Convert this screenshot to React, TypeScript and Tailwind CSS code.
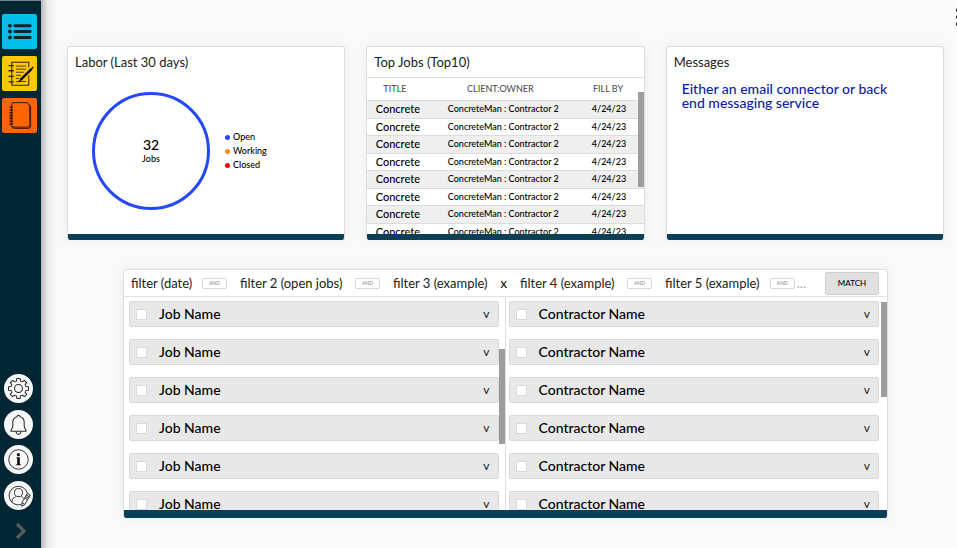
import React from "react";

const jobs = Array.from({ length: 8 }, (_, i) => ({
  id: i,
  title: "Concrete",
  client: "ConcreteMan : Contractor 2",
  fillBy: "4/24/23",
}));

const legend = [
  { label: "Open", dot: "bg-[#2448ff]" },
  { label: "Working", dot: "bg-[#ff8c1a]" },
  { label: "Closed", dot: "bg-[#f5000c]" },
];

const filters = [
  { label: "filter (date)", join: "AND" },
  { label: "filter 2 (open jobs)", join: "AND" },
  { label: "filter 3 (example)", join: "x" },
  { label: "filter 4 (example)", join: "AND" },
];

function ListIcon() {
  return (
    <svg viewBox="0 0 34 34" className="size-full" stroke="#10242c" strokeLinecap="round">
      <g fill="#10242c" stroke="none">
        <circle cx="7.7" cy="11.3" r="1.9" />
        <circle cx="7.7" cy="17" r="1.9" />
        <circle cx="7.7" cy="22.8" r="1.9" />
      </g>
      <path d="M12.5 11.3H27.3M12.5 17H27.3M12.5 22.8H27.3" strokeWidth="2.9" />
    </svg>
  );
}

function NotesIcon() {
  return (
    <svg viewBox="0 0 34 34" className="size-full" fill="none" stroke="#2b2407" strokeWidth="1">
      <path d="M26 11V6H9.5V28.5H26V19" />
      <path d="M6.3 9.3H11.5M6.3 14.3H11.5M6.3 19.8H11.5M6.3 25.2H11.5" strokeWidth="1.3" />
      <path d="M13.5 9.8H23.5M13.5 12.8H23.5M13.5 15.8H21.5M13.5 18.8H18.5M13.5 21.8H16.5M13.5 24.8H23.5" strokeWidth=".8" />
      <path d="M18 23.2L28.8 12.4" stroke="#111" strokeWidth="2.4" />
      <path d="M16.4 24.8L18.6 22.6M28.2 13L30.2 11" stroke="#111" strokeWidth="1.3" strokeLinecap="round" />
    </svg>
  );
}

function NotebookIcon() {
  return (
    <svg viewBox="0 0 34 34" className="size-full" fill="none" stroke="#2b1200" strokeWidth=".9">
      <path d="M9.5 8V6.5Q9.5 4.5 11.5 4.5H23.5Q25.5 4.5 26 6.5L27 8.5V26Q27 28.3 24.8 28.3H11.5Q9.5 28.3 9.5 26.5V8" />
      <path d="M26.3 6.3Q27.8 7 27.8 9V27Q27.8 29.5 25.3 29.5H12Q9.8 29.5 9.6 27.5" strokeWidth=".9" />
      <path d="M7.3 9H10.5M7.3 11.7H10.5M7.3 14.4H10.5M7.3 17.1H10.5M7.3 19.8H10.5M7.3 22.5H10.5M7.3 25.2H10.5" strokeWidth="1.5" />
    </svg>
  );
}

function GearIcon() {
  const teeth = [0, 45, 90, 135, 180, 225, 270, 315];
  return (
    <svg viewBox="0 0 28 28" className="size-full" fill="none" stroke="#262626" strokeWidth="1" strokeLinejoin="round">
      {teeth.map((a) => (
        <path
          key={a}
          transform={`rotate(${a} 14 14)`}
          d="M11.2 7.2L12.1 6.8L12.4 4.4H15.6L15.9 6.8L16.8 7.2"
        />
      ))}
      <circle cx="14" cy="14" r="3.8" />
    </svg>
  );
}

function BellIcon() {
  return (
    <svg viewBox="0 0 28 28" className="size-full" fill="none" stroke="#262626" strokeWidth="1" strokeLinejoin="round">
      <path d="M7 20.5H21Q21.7 20.5 21.2 19.5Q19.6 17.6 19.5 15.5V12Q19.4 7.3 15.4 6.5Q15.4 5 14 5T12.6 6.5Q8.6 7.3 8.5 12V15.5Q8.4 17.6 6.8 19.5Q6.3 20.5 7 20.5Z" />
      <path d="M11.8 21V21.3Q12.3 23.6 14 23.6T16.2 21.3V21" />
    </svg>
  );
}

function InfoIcon() {
  return (
    <svg viewBox="0 0 28 28" className="size-full" fill="none" stroke="#262626">
      <circle cx="14" cy="14" r="9.4" strokeWidth=".9" />
      <g fill="#111" stroke="none">
        <circle cx="13.9" cy="9.3" r="1.5" />
        <path d="M12 11.9H15.3V18.6H16.2V19.6H11.8V18.6H12.7V12.9H12Z" />
      </g>
    </svg>
  );
}

function ProfileIcon() {
  return (
    <svg viewBox="0 0 28 28" className="size-full" fill="none" stroke="#262626" strokeWidth=".9" strokeLinejoin="round">
      <path d="M16.5 22.7A9 9 0 1 1 22.6 11.8" />
      <circle cx="14" cy="11.2" r="3.9" />
      <path d="M7.4 20.4Q8 16.2 11.3 15.1M16.8 15.1Q18.3 15.7 19.2 17" />
      <path d="M17.3 20.9L22.6 11.9L25.3 13.5L20.1 22.6L17.2 24.5ZM17.3 20.9L20.1 22.6M21.6 13.6L24.4 15.2M20.8 15L23.5 16.6M20 16.4L22.7 18" />
    </svg>
  );
}

const tiles = [
  { name: "Lists", color: "bg-[#00bfea]", icon: <ListIcon /> },
  { name: "Notes", color: "bg-[#ffc800]", icon: <NotesIcon /> },
  { name: "Notebook", color: "bg-[#ff6500]", icon: <NotebookIcon /> },
];

const tools = [
  { name: "Settings", icon: <GearIcon /> },
  { name: "Notifications", icon: <BellIcon /> },
  { name: "Information", icon: <InfoIcon /> },
  { name: "Profile", icon: <ProfileIcon /> },
];

function Sidebar() {
  return (
    <nav className="flex w-[41px] shrink-0 flex-col border-t border-[#71828a] bg-[#032635] pt-[13px] pb-2">
      <div className="flex flex-col gap-[7px] pl-0.5">
        {tiles.map((t) => (
          <button key={t.name} aria-label={t.name} className={`size-[35px] rounded-[2px] ${t.color}`}>
            {t.icon}
          </button>
        ))}
      </div>
      <div className="mt-auto flex h-34 flex-col justify-between pl-1">
        {tools.map((t) => (
          <button key={t.name} aria-label={t.name} className="size-[29px] rounded-full bg-[#f7f7f7]">
            {t.icon}
          </button>
        ))}
      </div>
      <button aria-label="Expand" className="mt-3 flex h-[18px] items-center justify-center">
        <svg viewBox="0 0 12 18" className="h-[18px] w-3" fill="none" stroke="#555b5e" strokeWidth="3.2">
          <path d="M2 2L9 9L2 16" />
        </svg>
      </button>
    </nav>
  );
}

function Card({ title, children }: { title: string; children?: React.ReactNode }) {
  return (
    <section className="flex h-[194px] flex-col overflow-hidden rounded-[3px] border border-b-0 border-[#dedede] bg-white shadow-[0_0_12px_rgba(0,0,0,0.05)]">
      <h2 className="px-[7px] pt-[7px] pb-[7px] text-[13px] leading-4 text-[#222]">{title}</h2>
      <div className="flex min-h-0 flex-1 flex-col overflow-hidden">{children}</div>
      <div className="h-1.5 shrink-0 bg-[#0a3f56]" />
    </section>
  );
}

function LaborCard() {
  return (
    <Card title="Labor (Last 30 days)">
      <div className="flex items-center gap-[15px] pt-[15px] pl-6">
        <div className="flex size-[118px] flex-col items-center justify-center rounded-full border-3 border-[#2448ff] text-black">
          <span className="text-[14px] leading-4 font-medium">32</span>
          <span className="text-[9px] leading-3 font-medium">Jobs</span>
        </div>
        <ul className="text-[9px] leading-[14px] font-medium text-black">
          {legend.map((l) => (
            <li key={l.label} className="flex items-center gap-[3px]">
              <span className={`size-[5px] rounded-full ${l.dot}`} />
              {l.label}
            </li>
          ))}
        </ul>
      </div>
    </Card>
  );
}

function JobsCard() {
  return (
    <Card title="Top Jobs (Top10)">
      <div className="relative border-t border-[#dedede]">
        <table className="w-full table-fixed border-collapse text-center text-black">
          <colgroup>
            <col className="w-[61px]" />
            <col className="w-[150px]" />
            <col />
          </colgroup>
          <thead>
            <tr className="h-[22px] text-[9px] leading-3 text-[#555]">
              <th className="p-0 pr-1.5 font-medium">TITLE</th>
              <th className="p-0 pr-1.5 font-medium">CLIENT:OWNER</th>
              <th className="p-0 pr-1.5 font-medium">FILL BY</th>
            </tr>
          </thead>
          <tbody>
            {jobs.map((j) => (
              <tr
                key={j.id}
                className="border-t border-[#dcdcdc] leading-4 font-medium odd:h-[18px] odd:bg-[#efefef] even:h-[17px]"
              >
                <td className="p-0 text-[11px]">{j.title}</td>
                <td className="p-0 text-[9px]">{j.client}</td>
                <td className="p-0 pr-1 text-[9px]">{j.fillBy}</td>
              </tr>
            ))}
          </tbody>
        </table>
        <div className="absolute top-[14px] right-0 h-[95px] w-[6px] bg-[#9d9d9d]" />
      </div>
    </Card>
  );
}

function MessagesCard() {
  return (
    <Card title="Messages">
      <p className="pt-[5px] pr-9 pl-[15px] text-[14px] leading-[14px] font-medium text-[#0b1ea6]">
        Either an email connector or back end messaging service
      </p>
    </Card>
  );
}

function JoinBadge() {
  return (
    <button className="h-[11px] w-[25px] rounded-[2px] border border-[#d6d6d6] text-center text-[5px] leading-[9px] text-[#888]">
      AND
    </button>
  );
}

function FilterBar() {
  return (
    <div className="flex h-[27px] items-center gap-[19px] border-b border-[#e2e2e2] pr-2 pl-[7px]">
      <div className="grid min-w-0 flex-1 grid-cols-[109fr_153fr_127fr_145fr_141fr] text-[13px] leading-4 whitespace-nowrap text-[#222]">
        {filters.map((f) => (
          <div key={f.label} className="flex items-center justify-between pr-[13px]">
            <span>{f.label}</span>
            {f.join === "AND" ? <JoinBadge /> : <span className="text-black">{f.join}</span>}
          </div>
        ))}
        <div className="flex items-center justify-between">
          <span>filter 5 (example)</span>
          <span className="flex items-center gap-0.5">
            <JoinBadge />
            <span className="text-[#aaa]">...</span>
          </span>
        </div>
      </div>
      <button className="h-[23px] w-[54px] rounded-[2px] border border-[#cfcfcf] bg-[#e0e0e0] text-[8px] font-medium text-black">
        MATCH
      </button>
    </div>
  );
}

function NameList({ label, side, thumb }: { label: string; side: string; thumb: string }) {
  return (
    <div className={`relative min-w-0 overflow-hidden pt-1 ${side}`}>
      <ul className="flex flex-col gap-3">
        {[0, 1, 2, 3, 4, 5].map((i) => (
          <li
            key={i}
            className="flex h-[26px] shrink-0 items-center justify-between rounded-[2px] border border-[#d9d9d9] bg-[#e8e8e8] pr-2 pl-1.5"
          >
            <label className="flex items-center gap-3 text-[14px] leading-4 font-medium text-black">
              <input type="checkbox" className="size-[11px] appearance-none border border-[#dadada] bg-white" />
              {label}
            </label>
            <button aria-label={`Expand ${label}`} className="text-[12px] leading-4 text-[#222]">
              v
            </button>
          </li>
        ))}
      </ul>
      <div className={`absolute right-0 h-[95px] w-[6px] bg-[#9d9d9d] ${thumb}`} />
    </div>
  );
}

export default function App() {
  return (
    <div className="flex min-h-screen bg-[#f9f9f9] font-['Lato','Open_Sans',sans-serif]">
      <Sidebar />
      <div className="w-[14px] shrink-0 bg-linear-to-r from-[#b9b9b9] via-[#ececec] to-[#f9f9f9]" />
      <main className="min-w-0 flex-1 overflow-hidden pr-[13px] pl-3">
        <header className="flex h-[46px] items-start justify-end pt-[7px]">
          <button aria-label="More options" className="-mr-[19px]">
            <svg viewBox="0 0 10 20" className="h-5 w-[10px]" fill="#000">
              <circle cx="5" cy="3" r="2" />
              <circle cx="5" cy="10" r="2" />
              <circle cx="5" cy="17" r="2" />
            </svg>
          </button>
        </header>
        <div className="grid grid-cols-3 gap-[21px]">
          <LaborCard />
          <JobsCard />
          <MessagesCard />
        </div>
        <section className="mx-14 mt-[29px] flex h-[249px] flex-col overflow-hidden rounded-[3px] border border-b-0 border-[#dedede] bg-white shadow-[0_0_12px_rgba(0,0,0,0.05)]">
          <FilterBar />
          <div className="grid min-h-0 flex-1 grid-cols-2">
            <NameList label="Job Name" side="border-r border-[#dedede] pl-[5px] pr-1.5" thumb="top-[52px]" />
            <NameList label="Contractor Name" side="pl-[3px] pr-2" thumb="top-[5px]" />
          </div>
          <div className="h-2 shrink-0 bg-[#0a3f56]" />
        </section>
      </main>
    </div>
  );
}
